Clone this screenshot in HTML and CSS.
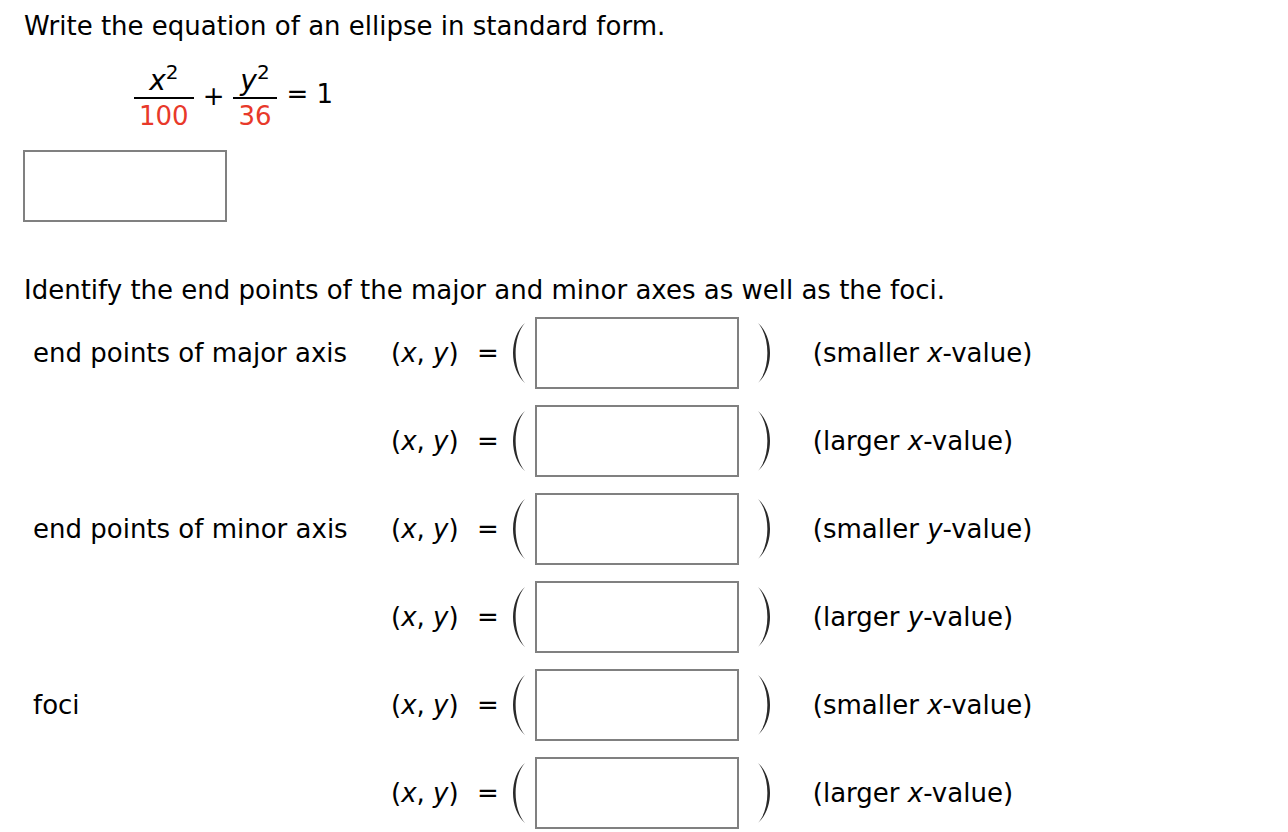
FILE: index.html
```html
<!DOCTYPE html>
<html>
<head>
<meta charset="utf-8">
<link rel="stylesheet" href="styles.css">
</head>
<body>
<div class="page">
  <p class="q">Write the equation of an ellipse in standard form.</p>
  <div class="eq">
    <span class="frac"><span class="num"><i>x</i><sup>2</sup></span><span class="den">100</span></span>
    <span class="op op-plus">+</span>
    <span class="frac"><span class="num"><i>y</i><sup>2</sup></span><span class="den">36</span></span>
    <span class="op op-eq">= 1</span>
  </div>
  <div class="box box-eq"></div>
  <p class="q q2">Identify the end points of the major and minor axes as well as the foci.</p>
  <div class="rows">
    <div class="row">
      <span class="lbl">end points of major axis</span>
      <span class="xy">(<i>x</i>, <i>y</i>)</span><span class="eqs">=</span>
      <svg class="par par-l" viewBox="0 0 14 60" width="14" height="60"><path d="M13 0 C-3 14 -3 46 13 60 C0.5 46 0.5 14 13 0 Z"/></svg>
      <span class="box"></span>
      <svg class="par par-r" viewBox="0 0 14 60" width="14" height="60"><path d="M1 0 C17 14 17 46 1 60 C13.5 46 13.5 14 1 0 Z"/></svg>
      <span class="desc">(smaller <i>x</i>-value)</span>
    </div>
    <div class="row">
      <span class="lbl"></span>
      <span class="xy">(<i>x</i>, <i>y</i>)</span><span class="eqs">=</span>
      <svg class="par par-l" viewBox="0 0 14 60" width="14" height="60"><path d="M13 0 C-3 14 -3 46 13 60 C0.5 46 0.5 14 13 0 Z"/></svg>
      <span class="box"></span>
      <svg class="par par-r" viewBox="0 0 14 60" width="14" height="60"><path d="M1 0 C17 14 17 46 1 60 C13.5 46 13.5 14 1 0 Z"/></svg>
      <span class="desc">(larger <i>x</i>-value)</span>
    </div>
    <div class="row">
      <span class="lbl">end points of minor axis</span>
      <span class="xy">(<i>x</i>, <i>y</i>)</span><span class="eqs">=</span>
      <svg class="par par-l" viewBox="0 0 14 60" width="14" height="60"><path d="M13 0 C-3 14 -3 46 13 60 C0.5 46 0.5 14 13 0 Z"/></svg>
      <span class="box"></span>
      <svg class="par par-r" viewBox="0 0 14 60" width="14" height="60"><path d="M1 0 C17 14 17 46 1 60 C13.5 46 13.5 14 1 0 Z"/></svg>
      <span class="desc">(smaller <i>y</i>-value)</span>
    </div>
    <div class="row">
      <span class="lbl"></span>
      <span class="xy">(<i>x</i>, <i>y</i>)</span><span class="eqs">=</span>
      <svg class="par par-l" viewBox="0 0 14 60" width="14" height="60"><path d="M13 0 C-3 14 -3 46 13 60 C0.5 46 0.5 14 13 0 Z"/></svg>
      <span class="box"></span>
      <svg class="par par-r" viewBox="0 0 14 60" width="14" height="60"><path d="M1 0 C17 14 17 46 1 60 C13.5 46 13.5 14 1 0 Z"/></svg>
      <span class="desc">(larger <i>y</i>-value)</span>
    </div>
    <div class="row">
      <span class="lbl">foci</span>
      <span class="xy">(<i>x</i>, <i>y</i>)</span><span class="eqs">=</span>
      <svg class="par par-l" viewBox="0 0 14 60" width="14" height="60"><path d="M13 0 C-3 14 -3 46 13 60 C0.5 46 0.5 14 13 0 Z"/></svg>
      <span class="box"></span>
      <svg class="par par-r" viewBox="0 0 14 60" width="14" height="60"><path d="M1 0 C17 14 17 46 1 60 C13.5 46 13.5 14 1 0 Z"/></svg>
      <span class="desc">(smaller <i>x</i>-value)</span>
    </div>
    <div class="row">
      <span class="lbl"></span>
      <span class="xy">(<i>x</i>, <i>y</i>)</span><span class="eqs">=</span>
      <svg class="par par-l" viewBox="0 0 14 60" width="14" height="60"><path d="M13 0 C-3 14 -3 46 13 60 C0.5 46 0.5 14 13 0 Z"/></svg>
      <span class="box"></span>
      <svg class="par par-r" viewBox="0 0 14 60" width="14" height="60"><path d="M1 0 C17 14 17 46 1 60 C13.5 46 13.5 14 1 0 Z"/></svg>
      <span class="desc">(larger <i>x</i>-value)</span>
    </div>
  </div>
</div>
</body>
</html>
```

FILE: styles.css
```css
html, body {
  margin: 0;
  padding: 0;
  background: #ffffff;
}

body {
  font-family: "DejaVu Sans", Verdana, sans-serif;
  font-size: 26px;
  color: #000000;
}

.page {
  padding: 10px 0 0 24px;
}

.q {
  margin: 0;
  line-height: 32px;
}

.q2 {
  margin-top: 52px;
}

i {
  font-style: italic;
}

.eq {
  display: flex;
  align-items: center;
  gap: 9px;
  margin: 24px 0 0 110px;
}

.frac {
  display: inline-flex;
  flex-direction: column;
  align-items: stretch;
  text-align: center;
}

.num {
  line-height: 30px;
  padding: 0 5px 1px;
  border-bottom: 2px solid #000000;
}

.num i {
  font-size: 28px;
}

.num sup {
  font-size: 20px;
  line-height: 0;
  vertical-align: 11px;
}

.den {
  line-height: 30px;
  margin-top: 2px;
  padding: 0 5px;
  color: #e8392a;
}

.op {
  line-height: 30px;
}

.op-plus {
  padding-bottom: 6px;
}

.op-eq {
  padding-bottom: 9px;
  margin-left: 1px;
}

.box {
  display: block;
  box-sizing: border-box;
  width: 204px;
  height: 72px;
  border: 2px solid #808080;
  background: #ffffff;
}

.box-eq {
  margin: 19px 0 0 -1px;
}

.rows {
  display: flex;
  flex-direction: column;
  gap: 16px;
  margin-top: 11px;
}

.row {
  display: flex;
  align-items: center;
  height: 72px;
  padding-left: 9px;
  line-height: 30px;
}

.lbl {
  width: 358px;
  flex: none;
}

.xy {
  flex: none;
  width: 86px;
}

.eqs {
  flex: none;
}

.par {
  flex: none;
  display: block;
}

.par path {
  fill: #2a2a2a;
}

.par-l {
  margin: 0 9px 0 13px;
}

.row .box {
  flex: none;
}

.par-r {
  margin: 0 0 0 18px;
}

.desc {
  margin-left: 42px;
}
```
